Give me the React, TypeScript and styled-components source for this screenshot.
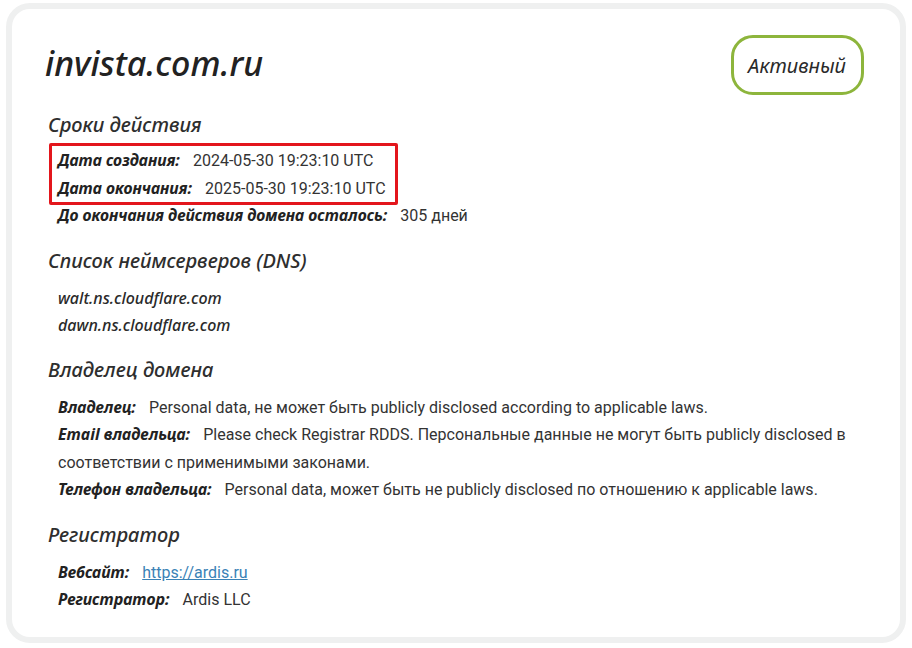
import styled, { createGlobalStyle } from "styled-components";

const GlobalStyle = createGlobalStyle`
  html, body {
    margin: 0;
    padding: 0;
    background: #ffffff;
  }
  body {
    font-family: "Noto Sans", "Open Sans", sans-serif;
    color: #2b2b2b;
  }
`;

const Card = styled.div`
  margin: 3px 6px 0;
  border: 6px solid #eff0f0;
  border-radius: 24px;
  background: #fff;
  padding: 26px 36px 23px 33px;
`;

const Header = styled.div`
  display: flex;
  justify-content: space-between;
  align-items: center;
  height: 60px;
  margin-bottom: -1px;
`;

const Title = styled.h1`
  margin: -4px 0 0;
  font-family: "Noto Sans", sans-serif;
  font-style: italic;
  font-weight: 500;
  font-size: 34px;
  line-height: 44px;
  color: #222;
`;

const Badge = styled.div`
  box-sizing: border-box;
  height: 60px;
  padding: 0 15px 0 14px;
  display: flex;
  align-items: center;
  border: 3px solid #8db53c;
  border-radius: 22px;
  font-style: italic;
  font-weight: 400;
  font-size: 20px;
  color: #2a2a2a;
`;

const Section = styled.section`
  margin-top: 17px;
`;

const Heading = styled.h2`
  margin: 0 0 10px 3px;
  font-style: italic;
  font-weight: 500;
  font-size: 20px;
  line-height: 28px;
  color: #2e2e2e;
`;

const List = styled.div`
  padding-left: 13px;
`;

const Highlight = styled.div`
  width: fit-content;
  margin: -6px 0 -3px -9px;
  padding: 1px 9px 0 6px;
  border: 3px solid #e3161c;
  border-radius: 2px;
`;

const Row = styled.div`
  font-size: 16px;
  line-height: 27.5px;
`;

const Label = styled.span`
  vertical-align: top;
  font-style: italic;
  font-weight: 700;
  font-size: 15.8px;
  color: #222;
  margin-right: 13px;
`;

const Value = styled.span`
  vertical-align: top;
  font-family: "Roboto", "Liberation Sans", sans-serif;
  font-weight: 400;
  color: #333;
`;

const Server = styled.div`
  font-style: italic;
  font-weight: 500;
  font-size: 16px;
  line-height: 27px;
  color: #2a2a2a;
`;

const Link = styled.a`
  vertical-align: top;
  font-family: "Roboto", "Liberation Sans", sans-serif;
  color: #3a82b6;
  text-decoration: underline;
`;

type Field = { label: string; value: string };

const owner: Field[] = [
  { label: "Владелец:", value: "Personal data, не может быть publicly disclosed according to applicable laws." },
  {
    label: "Email владельца:",
    value: "Please check Registrar RDDS. Персональные данные не могут быть publicly disclosed в соответствии с применимыми законами.",
  },
  { label: "Телефон владельца:", value: "Personal data, может быть не publicly disclosed по отношению к applicable laws." },
];

const FieldRow = ({ label, value }: Field) => (
  <Row>
    <Label>{label}</Label>
    <Value>{value}</Value>
  </Row>
);

export default function App() {
  return (
    <>
      <GlobalStyle />
      <Card>
        <Header>
          <Title>invista.com.ru</Title>
          <Badge>Активный</Badge>
        </Header>

        <Section>
          <Heading>Сроки действия</Heading>
          <List>
            <Highlight>
              <FieldRow label="Дата создания:" value="2024-05-30 19:23:10 UTC" />
              <FieldRow label="Дата окончания:" value="2025-05-30 19:23:10 UTC" />
            </Highlight>
            <FieldRow label="До окончания действия домена осталось:" value="305 дней" />
          </List>
        </Section>

        <Section>
          <Heading>Список неймсерверов (DNS)</Heading>
          <List>
            <Server>walt.ns.cloudflare.com</Server>
            <Server>dawn.ns.cloudflare.com</Server>
          </List>
        </Section>

        <Section>
          <Heading>Владелец домена</Heading>
          <List>
            {owner.map((f) => (
              <FieldRow key={f.label} {...f} />
            ))}
          </List>
        </Section>

        <Section>
          <Heading>Регистратор</Heading>
          <List>
            <Row>
              <Label>Вебсайт:</Label>
              <Link href="#">https://ardis.ru</Link>
            </Row>
            <FieldRow label="Регистратор:" value="Ardis LLC" />
          </List>
        </Section>
      </Card>
    </>
  );
}
